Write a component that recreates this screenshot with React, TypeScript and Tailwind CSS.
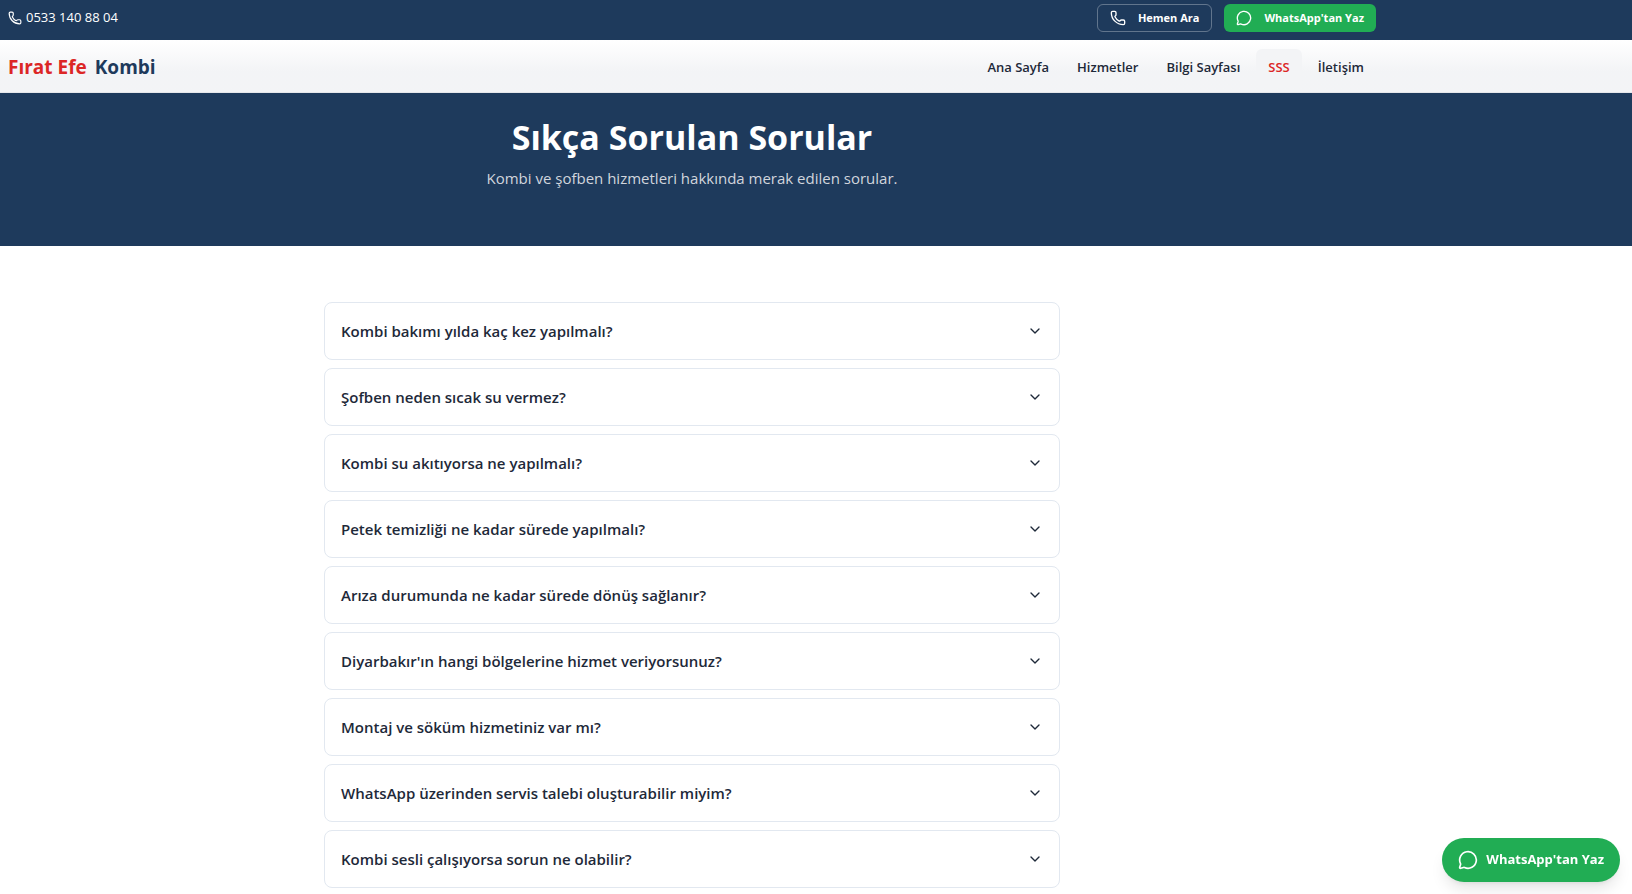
import * as Accordion from '@radix-ui/react-accordion'
import { ChevronDown, MessageCircle, Phone } from 'lucide-react'

const PHONE = '0533 140 88 04'
const PHONE_LINK = 'tel:+905331408804'
const WHATSAPP_LINK = 'https://wa.me/905331408804'

const navLinks = [
  { label: 'Ana Sayfa', href: '#ana-sayfa' },
  { label: 'Hizmetler', href: '#hizmetler' },
  { label: 'Bilgi Sayfası', href: '#bilgi' },
  { label: 'SSS', href: '#sss', active: true },
  { label: 'İletişim', href: '#iletisim' },
]

const faqs = [
  { q: 'Kombi bakımı yılda kaç kez yapılmalı?', a: 'Kombi bakımı yılda en az bir kez yapılmalıdır.' },
  { q: 'Şofben neden sıcak su vermez?', a: 'Gaz, su basıncı veya ateşleme arızası olabilir.' },
  { q: 'Kombi su akıtıyorsa ne yapılmalı?', a: 'Cihazı kapatıp servisimizi arayın.' },
  { q: 'Petek temizliği ne kadar sürede yapılmalı?', a: 'Petek temizliği iki yılda bir önerilir.' },
  { q: 'Arıza durumunda ne kadar sürede dönüş sağlanır?', a: 'Aynı gün içinde dönüş sağlanır.' },
  { q: "Diyarbakır'ın hangi bölgelerine hizmet veriyorsunuz?", a: 'Tüm merkez ilçelere hizmet veriyoruz.' },
  { q: 'Montaj ve söküm hizmetiniz var mı?', a: 'Evet, montaj ve söküm yapıyoruz.' },
  { q: 'WhatsApp üzerinden servis talebi oluşturabilir miyim?', a: 'Evet, WhatsApp hattımızdan yazabilirsiniz.' },
  { q: 'Kombi sesli çalışıyorsa sorun ne olabilir?', a: 'Kireçlenme veya fan arızası olabilir.' },
]

function TopBar() {
  return (
    <div className="bg-[#1e3a5c] text-white">
      <div className="flex h-10 max-w-[1384px] items-start justify-between px-2 pt-1">
        <a href={PHONE_LINK} className="flex h-7 items-center gap-1 text-[13px]">
          <Phone className="size-[14px]" />
          {PHONE}
        </a>
        <div className="flex gap-3 text-[11px] font-bold">
          <a href={PHONE_LINK} className="flex h-7 items-center gap-3 rounded-md border border-white/30 px-3">
            <Phone className="size-4" />
            Hemen Ara
          </a>
          <a href={WHATSAPP_LINK} className="flex h-7 items-center gap-3 rounded-md bg-[#21ad54] px-3">
            <MessageCircle className="size-4" />
            WhatsApp'tan Yaz
          </a>
        </div>
      </div>
    </div>
  )
}

function Header() {
  return (
    <header className="border-b border-gray-200 bg-linear-to-b from-white to-gray-100 to-60%">
      <div className="flex h-13 max-w-[1384px] items-center justify-between px-2 pt-0.5">
        <a href="#ana-sayfa" className="flex gap-2 text-[19px] font-bold">
          <span className="text-[#dc2626]">Fırat Efe</span>
          <span className="text-[#1e3a5c]">Kombi</span>
        </a>
        <nav className="flex gap-1">
          {navLinks.map((link) => (
            <a
              key={link.label}
              href={link.href}
              className={
                link.active
                  ? 'rounded-md bg-gray-100 px-3 py-2 text-[13px] leading-5 font-semibold text-[#dc2626]'
                  : 'rounded-md px-3 py-2 text-[13px] leading-5 font-semibold text-gray-800'
              }
            >
              {link.label}
            </a>
          ))}
        </nav>
      </div>
    </header>
  )
}

function Hero() {
  return (
    <section className="bg-[#1e3a5c]">
      <div className="max-w-[1384px] px-2 pt-6 pb-14 text-center">
        <h1 className="text-[34px] leading-10 font-bold text-white">Sıkça Sorulan Sorular</h1>
        <p className="mt-[9px] text-[15px] leading-6 text-gray-300">
          Kombi ve şofben hizmetleri hakkında merak edilen sorular.
        </p>
      </div>
    </section>
  )
}

function FaqList() {
  return (
    <section className="max-w-[1384px] py-14">
      <Accordion.Root type="single" collapsible className="mx-auto max-w-3xl space-y-2 px-4">
        {faqs.map((faq) => (
          <Accordion.Item key={faq.q} value={faq.q} className="rounded-lg border border-slate-200 px-4">
            <Accordion.Header>
              <Accordion.Trigger className="flex w-full items-center justify-between py-4 text-left text-[15px] leading-6 font-semibold text-gray-800">
                {faq.q}
                <ChevronDown className="size-4" />
              </Accordion.Trigger>
            </Accordion.Header>
            <Accordion.Content className="pb-4 text-sm text-gray-600">{faq.a}</Accordion.Content>
          </Accordion.Item>
        ))}
      </Accordion.Root>
    </section>
  )
}

export default function App() {
  return (
    <div className="min-h-screen bg-white font-['Open_Sans','Noto_Sans',sans-serif]">
      <TopBar />
      <Header />
      <main>
        <Hero />
        <FaqList />
      </main>
      <a
        href={WHATSAPP_LINK}
        className="fixed right-3 bottom-3 flex h-11 items-center gap-2 rounded-full bg-[#21ad54] px-4 text-[13px] font-bold text-white shadow-lg"
      >
        <MessageCircle className="size-5" />
        WhatsApp'tan Yaz
      </a>
    </div>
  )
}
